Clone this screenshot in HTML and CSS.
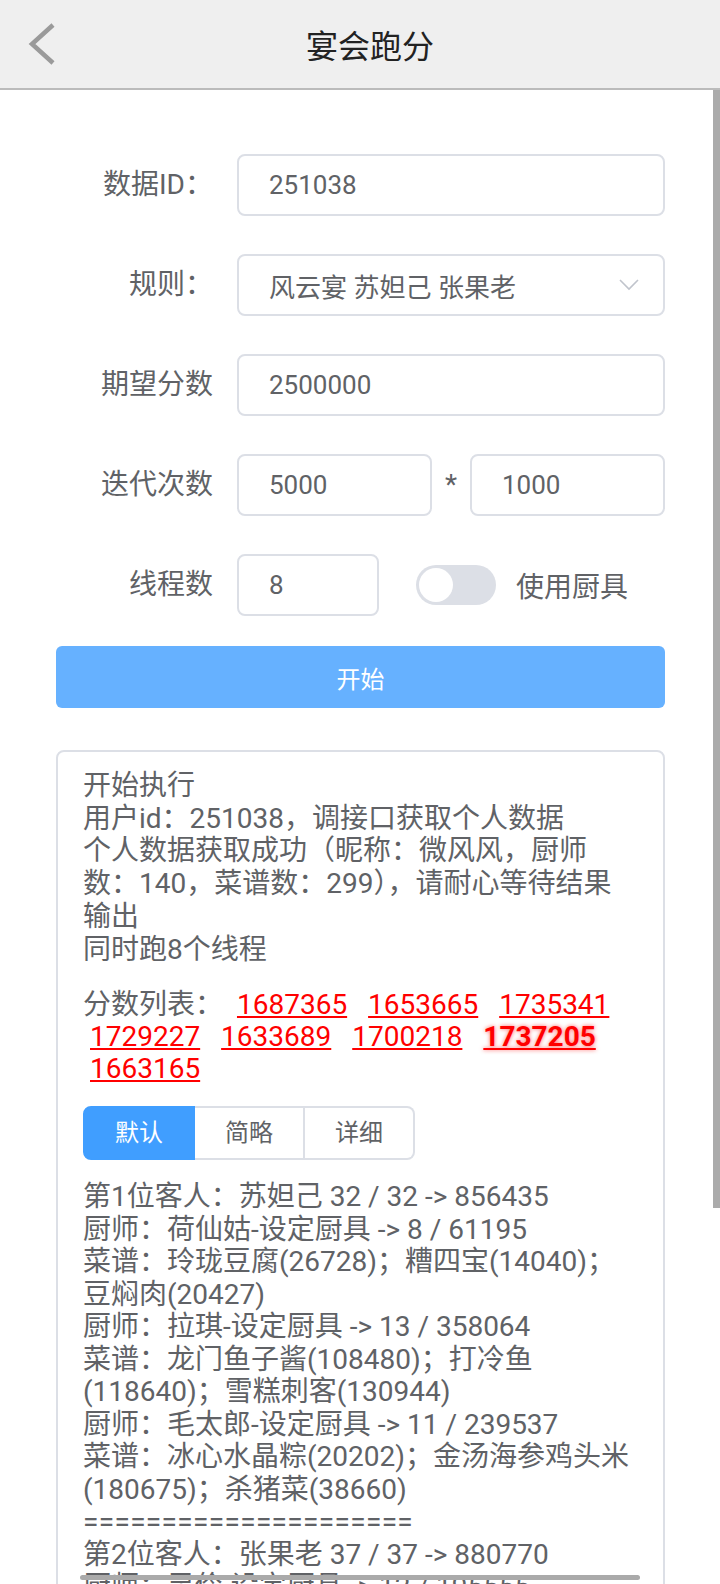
FILE: index.html
```html
<!DOCTYPE html>
<html lang="zh-CN">
<head>
  <meta charset="utf-8">
  <title>宴会跑分</title>
  <link rel="stylesheet" href="styles.css">
</head>
<body>

  <header class="top-bar">
    <a class="back-btn">
      <svg width="28" height="42" viewBox="0 0 28 42"><polyline points="25,2 4,21 25,40" fill="none" stroke="#9a9a9a" stroke-width="4.5"/></svg>
    </a>
    <h1 class="top-title">宴会跑分</h1>
    <span></span>
  </header>

  <main class="page">
    <form class="run-form">
      <div class="form-row">
        <label class="form-label">数据ID：</label>
        <div class="form-field"><input class="text-input" value="251038"></div>
      </div>
      <div class="form-row">
        <label class="form-label">规则：</label>
        <div class="form-field">
          <div class="text-input select-box">
            <span>风云宴 苏妲己 张果老</span>
            <svg width="20" height="12" viewBox="0 0 20 12"><polyline points="1,1 10,10 19,1" fill="none" stroke="#c0c4cc" stroke-width="1.6"/></svg>
          </div>
        </div>
      </div>
      <div class="form-row">
        <label class="form-label">期望分数</label>
        <div class="form-field"><input class="text-input" value="2500000"></div>
      </div>
      <div class="form-row">
        <label class="form-label">迭代次数</label>
        <div class="form-field times-field">
          <input class="text-input" value="5000">
          <span class="times-sign">*</span>
          <input class="text-input" value="1000">
        </div>
      </div>
      <div class="form-row">
        <label class="form-label">线程数</label>
        <div class="form-field">
          <input class="text-input thread-input" value="8">
          <span class="switch"><span class="switch-knob"></span></span>
          <span class="switch-label">使用厨具</span>
        </div>
      </div>
    </form>

    <button class="start-btn">开始</button>

    <section class="output-box">
      <div class="log">
        <div>开始执行</div>
        <div>用户id：251038，调接口获取个人数据</div>
        <div>个人数据获取成功（昵称：微风风，厨师数：140，菜谱数：299），请耐心等待结果输出</div>
        <div>同时跑8个线程</div>
      </div>

      <div class="score-list">
        <span class="score-title">分数列表：</span>
        <a class="score-link">1687365</a>
        <a class="score-link">1653665</a>
        <a class="score-link">1735341</a>
        <a class="score-link">1729227</a>
        <a class="score-link">1633689</a>
        <a class="score-link">1700218</a>
        <a class="score-link best">1737205</a>
        <a class="score-link">1663165</a>
      </div>

      <div class="view-tabs">
        <span class="view-tab active">默认</span>
        <span class="view-tab">简略</span>
        <span class="view-tab">详细</span>
      </div>

      <div class="result">
        <div>第1位客人：苏妲己 32 / 32 -&gt; 856435</div>
        <div>厨师：荷仙姑-设定厨具 -&gt; 8 / 61195</div>
        <div>菜谱：玲珑豆腐(26728)；糟四宝(14040)；豆焖肉(20427)</div>
        <div>厨师：拉琪-设定厨具 -&gt; 13 / 358064</div>
        <div>菜谱：龙门鱼子酱(108480)；打冷鱼(118640)；雪糕刺客(130944)</div>
        <div>厨师：毛太郎-设定厨具 -&gt; 11 / 239537</div>
        <div>菜谱：冰心水晶粽(20202)；金汤海参鸡头米(180675)；杀猪菜(38660)</div>
        <div class="separator">=====================</div>
        <div>第2位客人：张果老 37 / 37 -&gt; 880770</div>
        <div>厨师：灵伶-设定厨具 -&gt; 12 / 195555</div>
      </div>
    </section>
  </main>

  <div class="scroll-thumb-v"></div>
  <div class="scroll-thumb-h"></div>

</body>
</html>
```

FILE: styles.css
```css
html {
  font-family: Roboto, "Noto Sans CJK SC", sans-serif;
  overflow: hidden; /* screenshot only shows the viewport */
}

* {
  box-sizing: border-box;
}

body {
  margin: 0;
  color: #606266;
  background: #fff;
}

/* header */
.top-bar {
  height: 90px;
  background: #efefef;
  border-bottom: 2px solid #bbb;
  display: grid;
  grid-template-columns: 80px 1fr 60px;
  align-items: center;
}

.back-btn {
  display: flex;
  padding-left: 28px;
}

.top-title {
  margin: 0;
  font-size: 32px;
  font-weight: normal;
  text-align: center;
  color: #222;
}

.page {
  padding: 64px 55px 0 56px;
}

/* form */
.form-row {
  display: flex;
  align-items: center;
  height: 62px;
  margin-bottom: 38px;
}

.form-row:last-child {
  margin-bottom: 30px;
}

.form-label {
  flex: none;
  width: 181px;
  padding-right: 24px;
  text-align: right;
  font-size: 28px;
  line-height: 62px;
}

.form-field {
  flex: 1;
  display: flex;
  align-items: center;
}

.text-input {
  width: 100%;
  height: 62px;
  border: 2px solid #dcdfe6;
  border-radius: 8px;
  padding: 0 30px;
  font: inherit;
  font-size: 26px;
  color: #606266;
  background: #fff;
  outline: none;
}

.select-box {
  display: flex;
  align-items: center;
  justify-content: space-between;
  padding-right: 24px;
}

.times-field {
  display: grid;
  grid-template-columns: 1fr 38px 1fr;
}

.times-sign {
  text-align: center;
  font-size: 28px;
  line-height: 62px;
}

.thread-input {
  width: 142px;
}

.switch {
  margin-left: 37px;
  width: 80px;
  height: 40px;
  border-radius: 20px;
  background: #dcdfe6;
  display: flex;
  align-items: center;
  padding-left: 3px;
}

.switch-knob {
  width: 34px;
  height: 34px;
  border-radius: 50%;
  background: #fff;
}

.switch-label {
  margin-left: 20px;
  font-size: 28px;
}

.start-btn {
  display: block;
  width: 100%;
  height: 62px;
  border: 0;
  border-radius: 6px;
  background: #66b1ff;
  color: #fff;
  font: inherit;
  font-size: 24px;
}

/* output */
.output-box {
  margin-top: 42px;
  border: 2px solid #dcdfe6;
  border-radius: 8px;
  padding: 18px 28px 40px 25px;
  font-size: 28px;
  line-height: 32.7px;
}

.score-list {
  margin: 23px 0 21px;
  line-height: 32px;
}

.score-link {
  margin: 0 7px;
  color: #f00;
  text-decoration: underline;
}

.score-link.best {
  font-weight: bold;
  text-shadow: 0 0 4px rgba(255, 0, 0, 0.6);
}

.view-tabs {
  display: flex;
  margin-bottom: 21px;
}

.view-tab {
  height: 54px;
  padding: 0 30px;
  border: 2px solid #dcdfe6;
  border-left: 0;
  font-size: 24px;
  line-height: 50px;
  background: #fff;
}

.view-tab:first-child {
  border-left: 2px solid #dcdfe6;
  border-radius: 8px 0 0 8px;
}

.view-tab:last-child {
  border-radius: 0 8px 8px 0;
}

.view-tab.active {
  background: #409eff;
  border-color: #409eff;
  color: #fff;
}

.result {
  line-height: 32.5px;
}

.separator {
  letter-spacing: 0.35px;
}

/* fake scroll indicators, drawn over the page */
.scroll-thumb-v {
  position: fixed;
  right: 0;
  top: 90px;
  width: 7px;
  height: 1118px;
  background: #ababab;
}

.scroll-thumb-h {
  position: fixed;
  left: 80px;
  top: 1575px;
  width: 560px;
  height: 5px;
  border-radius: 3px;
  background: #aaa;
}
```
